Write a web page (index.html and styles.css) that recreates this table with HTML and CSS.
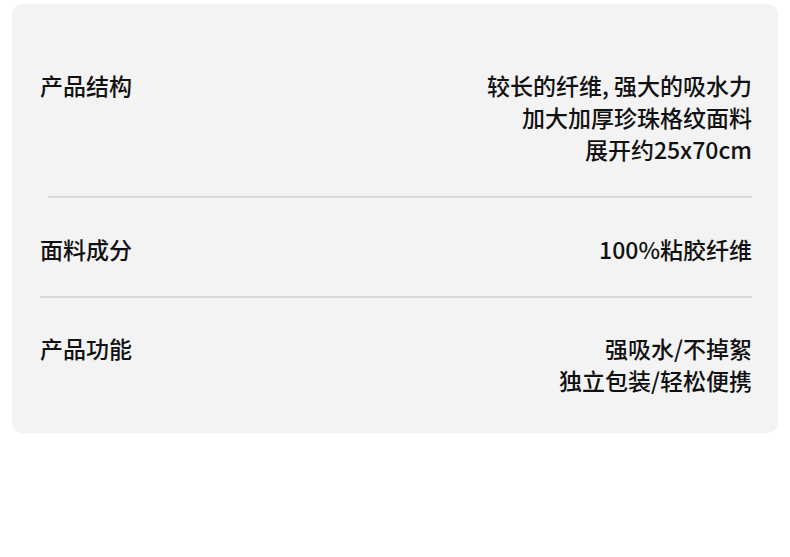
FILE: index.html
```html
<!DOCTYPE html>
<html lang="zh-CN">
<head>
<meta charset="utf-8">
<link rel="stylesheet" href="styles.css">
</head>
<body>
<div class="card">
  <div class="row row-first">
    <div class="label">产品结构</div>
    <div class="value">
      <div>较长的纤维, 强大的吸水力</div>
      <div>加大加厚珍珠格纹面料</div>
      <div>展开约25x70cm</div>
    </div>
  </div>
  <div class="divider divider-inset"></div>
  <div class="row">
    <div class="label">面料成分</div>
    <div class="value">
      <div>100%粘胶纤维</div>
    </div>
  </div>
  <div class="divider"></div>
  <div class="row row-last">
    <div class="label">产品功能</div>
    <div class="value">
      <div>强吸水/不掉絮</div>
      <div>独立包装/轻松便携</div>
    </div>
  </div>
</div>
</body>
</html>
```

FILE: styles.css
```css
* { box-sizing: border-box; }
html, body { margin: 0; padding: 0; background: #ffffff; }
body {
  width: 790px;
  height: 557px;
  padding: 4px 12px 0 12px;
  font-family: "Noto Sans CJK SC", "Noto Sans", sans-serif;
  color: #111111;
}
.card {
  background: #f3f3f3;
  border-radius: 10px;
  height: 429px;
  padding: 0 26px 0 28px;
  display: flex;
  flex-direction: column;
}
.row {
  display: flex;
  justify-content: space-between;
  align-items: flex-start;
  padding: 35px 0 31px;
  font-size: 23px;
  font-weight: 500;
  line-height: 32px;
}
.row-first { padding-top: 65px; }
.row-last { padding-top: 34px; }
.label { flex: none; }
.value { text-align: right; }
.divider {
  height: 2px;
  background: #dadada;
}
.divider-inset { margin-left: 8px; }
```
